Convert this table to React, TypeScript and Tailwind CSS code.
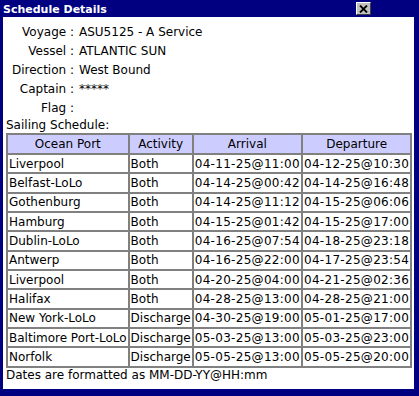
import React from "react"

// ---------------------------------------------------------------------------
// Data
// ---------------------------------------------------------------------------

const details: [string, string][] = [
  ["Voyage", "ASU5125 - A Service"],
  ["Vessel", "ATLANTIC SUN"],
  ["Direction", "West Bound"],
  ["Captain", "*****"],
  ["Flag", ""],
]

const stops: [string, string, string, string][] = [
  ["Liverpool", "Both", "04-11-25@11:00", "04-12-25@10:30"],
  ["Belfast-LoLo", "Both", "04-14-25@00:42", "04-14-25@16:48"],
  ["Gothenburg", "Both", "04-14-25@11:12", "04-15-25@06:06"],
  ["Hamburg", "Both", "04-15-25@01:42", "04-15-25@17:00"],
  ["Dublin-LoLo", "Both", "04-16-25@07:54", "04-18-25@23:18"],
  ["Antwerp", "Both", "04-16-25@22:00", "04-17-25@23:54"],
  ["Liverpool", "Both", "04-20-25@04:00", "04-21-25@02:36"],
  ["Halifax", "Both", "04-28-25@13:00", "04-28-25@21:00"],
  ["New York-LoLo", "Discharge", "04-30-25@19:00", "05-01-25@17:00"],
  ["Baltimore Port-LoLo", "Discharge", "05-03-25@13:00", "05-03-25@23:00"],
  ["Norfolk", "Discharge", "05-05-25@13:00", "05-05-25@20:00"],
]

// ---------------------------------------------------------------------------
// Component
// ---------------------------------------------------------------------------

export default function App() {
  return (
    <div className="w-[419px] h-[396px] bg-[#000080] flex flex-col pl-[3px] pr-[5px] pb-[7px] font-['DejaVu_Sans',Verdana,sans-serif] text-[12px] text-black">
      {/* Title bar */}
      <div className="h-[17px] flex items-center shrink-0">
        <span className="text-white font-bold text-[11px] leading-none pt-[2px]">Schedule Details</span>
        <button className="ml-auto mr-[43px] w-[15px] h-[13px] bg-[#c0c0c0] border-t border-l border-white border-r border-b border-r-[#404040] border-b-[#404040] flex items-center justify-center p-0">
          <svg width="9" height="8" viewBox="0 0 9 8">
            <path d="M1 0.5 L8 7.5 M8 0.5 L1 7.5" stroke="#000" strokeWidth="1.8" />
          </svg>
        </button>
      </div>

      {/* Body */}
      <div className="flex-1 bg-white pl-[2px] pt-[6px]">
        <div className="grid grid-cols-[69px_1fr] gap-x-[5px]">
          {details.map(([label, value]) => (
            <React.Fragment key={label}>
              <div className="h-[19px] leading-[19px] text-right whitespace-nowrap">{label} :</div>
              <div className="h-[19px] leading-[19px] whitespace-nowrap">{value}</div>
            </React.Fragment>
          ))}
        </div>
        <div className="leading-[15px] pl-[1px]">Sailing Schedule:</div>
        <table className="border-separate border-spacing-0 border border-[#808080] ml-[1px]">
          <thead>
            <tr className="bg-[#ccccff]">
              {["Ocean Port", "Activity", "Arrival", "Departure"].map((h) => (
                <th key={h} className="font-normal text-center border border-[#808080] px-[1px] h-[20px] leading-[14px] whitespace-nowrap">
                  {h}
                </th>
              ))}
            </tr>
          </thead>
          <tbody>
            {stops.map((row, i) => (
              <tr key={i}>
                {row.map((cell, j) => (
                  <td
                    key={j}
                    className={
                      j >= 2
                        ? "text-left border border-[#808080] px-[1px] h-[19.33px] leading-[14px] whitespace-nowrap tracking-[0.3px]"
                        : "text-left border border-[#808080] px-[1px] h-[19.33px] leading-[14px] whitespace-nowrap"
                    }
                  >
                    {cell}
                  </td>
                ))}
              </tr>
            ))}
          </tbody>
        </table>
        <div className="leading-[15px] pl-[1px]">Dates are formatted as MM-DD-YY@HH:mm</div>
      </div>
    </div>
  )
}
